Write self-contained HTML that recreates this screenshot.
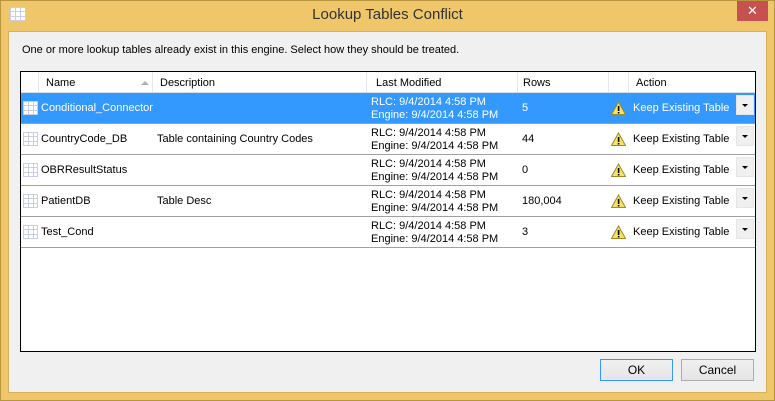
<!DOCTYPE html>
<html><head><style>
*{margin:0;padding:0;box-sizing:border-box}
body{width:775px;height:401px;overflow:hidden;font-family:"Liberation Sans",sans-serif;font-size:11px;color:#000;background:#f0c86b;position:relative}
.a{position:absolute;white-space:nowrap}
.frame{position:absolute;left:0;top:0;width:775px;height:401px;border:1px solid #b8953f;background:#efc76a}
.client{position:absolute;left:8px;top:31px;width:759px;height:362px;background:#f0f0f0;border:1px solid #d7b05a}
.close{position:absolute;left:737px;top:1px;width:31px;height:20px;background:#c75050;color:#fff;text-align:center;font-size:13px;line-height:20px}
.grid{position:absolute;left:20px;top:71px;width:736px;height:281px;border:1px solid #000;background:#fff;overflow:hidden}
.hdr{position:absolute;left:0;top:0;width:734px;height:21px;background:#fff;border-bottom:1px solid #d5dfe5}
.hd{position:absolute;top:0;height:20px;border-left:1px solid #e3e8f0}
.row{position:absolute;left:0;width:734px;height:31px;border-bottom:1px solid #a0a0a0}
.sel{background:#3399ff;color:#fff}
.dd{position:absolute;left:715px;top:2px;width:18px;height:20px;background:#f0f0f0;border:1px solid #e5e5e5}
.dd:after{content:"";position:absolute;left:5px;top:8px;border-left:3px solid transparent;border-right:3px solid transparent;border-top:3px solid #000}
.btn{position:absolute;top:359px;width:73px;height:22px;border:1px solid #acacac;background:linear-gradient(#f0f0f0,#e5e5e5);text-align:center;line-height:20px;font-size:12px}
.t{top:9px}
.d{left:350px;top:3px;line-height:13px}
</style></head><body>
<div class="frame"></div>
<svg class="a" style="left:10px;top:7px" width="16" height="14"><rect x="0.5" y="0.5" width="15" height="13" fill="#fff" stroke="#c8cde8"/><path d="M5.5 0v14M10.5 0v14M0 4.5h16M0 9.5h16" stroke="#c8cde8"/></svg>
<div class="a" style="left:0;width:775px;top:6px;text-align:center;font-size:15px;color:#333">Lookup Tables Conflict</div>
<div class="close">✕</div>
<div class="client"></div>
<div class="a" style="left:22px;top:44px">One or more lookup tables already exist in this engine. Select how they should be treated.</div>
<div class="grid">
 <div class="hdr">
  <div class="hd" style="left:17px"></div><div class="hd" style="left:131px"></div><div class="hd" style="left:345px"></div><div class="hd" style="left:496px"></div><div class="hd" style="left:587px"></div><div class="hd" style="left:607px"></div>
  <div class="a" style="left:25px;top:5px">Name</div>
  <div class="a" style="left:120px;top:9px;border-left:4px solid transparent;border-right:4px solid transparent;border-bottom:4px solid #b0b0b0"></div>
  <div class="a" style="left:139px;top:5px">Description</div>
  <div class="a" style="left:355px;top:5px">Last Modified</div>
  <div class="a" style="left:502px;top:5px">Rows</div>
  <div class="a" style="left:615px;top:5px">Action</div>
 </div>
 <div class="row sel" style="top:21px">
  <svg class="a" style="left:2px;top:8px" width="15" height="14"><rect x="0.5" y="0.5" width="14" height="13" fill="#fff" stroke="#c8cde8"/><path d="M5.5 0v14M10.5 0v14M0 4.5h15M0 9.5h15" stroke="#c8cde8"/></svg>
  <div class="a t" style="left:20px">Conditional_Connector</div>
  <div class="a d">RLC: 9/4/2014 4:58 PM<br>Engine: 9/4/2014 4:58 PM</div>
  <div class="a t" style="left:501px">5</div>
  <svg class="a" style="left:590px;top:8px" width="15" height="14"><path d="M7.5 1L14.5 13.5H0.5Z" fill="#f6e16a" stroke="#a08a20"/><rect x="6.8" y="5" width="1.6" height="5" fill="#000"/><rect x="6.8" y="11" width="1.6" height="1.5" fill="#000"/></svg>
  <div class="a t" style="left:612px">Keep Existing Table</div>
  <div class="dd"></div>
 </div>
 <div class="row" style="top:52px">
  <svg class="a" style="left:2px;top:8px" width="15" height="14"><rect x="0.5" y="0.5" width="14" height="13" fill="#fff" stroke="#c8cde8"/><path d="M5.5 0v14M10.5 0v14M0 4.5h15M0 9.5h15" stroke="#c8cde8"/></svg>
  <div class="a t" style="left:20px">CountryCode_DB</div>
  <div class="a t" style="left:136px">Table containing Country Codes</div>
  <div class="a d">RLC: 9/4/2014 4:58 PM<br>Engine: 9/4/2014 4:58 PM</div>
  <div class="a t" style="left:501px">44</div>
  <svg class="a" style="left:590px;top:8px" width="15" height="14"><path d="M7.5 1L14.5 13.5H0.5Z" fill="#f6e16a" stroke="#a08a20"/><rect x="6.8" y="5" width="1.6" height="5" fill="#000"/><rect x="6.8" y="11" width="1.6" height="1.5" fill="#000"/></svg>
  <div class="a t" style="left:612px">Keep Existing Table</div>
  <div class="dd"></div>
 </div>
 <div class="row" style="top:83px">
  <svg class="a" style="left:2px;top:8px" width="15" height="14"><rect x="0.5" y="0.5" width="14" height="13" fill="#fff" stroke="#c8cde8"/><path d="M5.5 0v14M10.5 0v14M0 4.5h15M0 9.5h15" stroke="#c8cde8"/></svg>
  <div class="a t" style="left:20px">OBRResultStatus</div>
  <div class="a d">RLC: 9/4/2014 4:58 PM<br>Engine: 9/4/2014 4:58 PM</div>
  <div class="a t" style="left:501px">0</div>
  <svg class="a" style="left:590px;top:8px" width="15" height="14"><path d="M7.5 1L14.5 13.5H0.5Z" fill="#f6e16a" stroke="#a08a20"/><rect x="6.8" y="5" width="1.6" height="5" fill="#000"/><rect x="6.8" y="11" width="1.6" height="1.5" fill="#000"/></svg>
  <div class="a t" style="left:612px">Keep Existing Table</div>
  <div class="dd"></div>
 </div>
 <div class="row" style="top:114px">
  <svg class="a" style="left:2px;top:8px" width="15" height="14"><rect x="0.5" y="0.5" width="14" height="13" fill="#fff" stroke="#c8cde8"/><path d="M5.5 0v14M10.5 0v14M0 4.5h15M0 9.5h15" stroke="#c8cde8"/></svg>
  <div class="a t" style="left:20px">PatientDB</div>
  <div class="a t" style="left:136px">Table Desc</div>
  <div class="a d">RLC: 9/4/2014 4:58 PM<br>Engine: 9/4/2014 4:58 PM</div>
  <div class="a t" style="left:501px">180,004</div>
  <svg class="a" style="left:590px;top:8px" width="15" height="14"><path d="M7.5 1L14.5 13.5H0.5Z" fill="#f6e16a" stroke="#a08a20"/><rect x="6.8" y="5" width="1.6" height="5" fill="#000"/><rect x="6.8" y="11" width="1.6" height="1.5" fill="#000"/></svg>
  <div class="a t" style="left:612px">Keep Existing Table</div>
  <div class="dd"></div>
 </div>
 <div class="row" style="top:145px">
  <svg class="a" style="left:2px;top:8px" width="15" height="14"><rect x="0.5" y="0.5" width="14" height="13" fill="#fff" stroke="#c8cde8"/><path d="M5.5 0v14M10.5 0v14M0 4.5h15M0 9.5h15" stroke="#c8cde8"/></svg>
  <div class="a t" style="left:20px">Test_Cond</div>
  <div class="a d">RLC: 9/4/2014 4:58 PM<br>Engine: 9/4/2014 4:58 PM</div>
  <div class="a t" style="left:501px">3</div>
  <svg class="a" style="left:590px;top:8px" width="15" height="14"><path d="M7.5 1L14.5 13.5H0.5Z" fill="#f6e16a" stroke="#a08a20"/><rect x="6.8" y="5" width="1.6" height="5" fill="#000"/><rect x="6.8" y="11" width="1.6" height="1.5" fill="#000"/></svg>
  <div class="a t" style="left:612px">Keep Existing Table</div>
  <div class="dd"></div>
 </div>
</div>
<div class="btn" style="left:600px;border-color:#3399ff">OK</div>
<div class="btn" style="left:681px">Cancel</div>
</body></html>
